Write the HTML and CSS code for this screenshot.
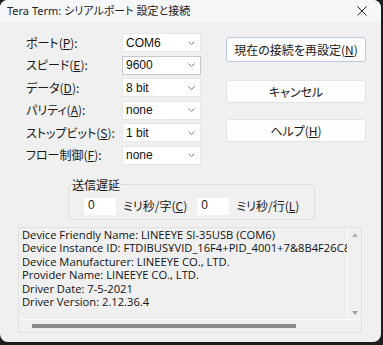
FILE: index.html
```html
<!DOCTYPE html>
<html lang="ja">
<head>
<meta charset="utf-8">
<link rel="stylesheet" href="styles.css">
</head>
<body>
<div class="window">
  <div class="titlebar">
    <span class="title">Tera Term: シリアルポート 設定と接続</span>
    <svg class="close" width="10" height="10" viewBox="0 0 10 10"><path d="M0.5 0.5 L9.5 9.5 M9.5 0.5 L0.5 9.5" stroke="#222" stroke-width="1" fill="none"/></svg>
  </div>
  <div class="content">
    <div class="top">
      <div class="form">
        <div class="row"><span class="label">ポート(<u>P</u>):</span><div class="combo"><span>COM6</span><svg class="chev" width="7" height="4" viewBox="0 0 7 4"><path d="M0.5 0.5 L3.5 3.5 L6.5 0.5" stroke="#888" fill="none"/></svg></div></div>
        <div class="row"><span class="label">スピード(<u>E</u>):</span><div class="combo focus"><span>9600</span><svg class="chev" width="7" height="4" viewBox="0 0 7 4"><path d="M0.5 0.5 L3.5 3.5 L6.5 0.5" stroke="#888" fill="none"/></svg></div></div>
        <div class="row"><span class="label">データ(<u>D</u>):</span><div class="combo"><span>8 bit</span><svg class="chev" width="7" height="4" viewBox="0 0 7 4"><path d="M0.5 0.5 L3.5 3.5 L6.5 0.5" stroke="#888" fill="none"/></svg></div></div>
        <div class="row"><span class="label">パリティ(<u>A</u>):</span><div class="combo"><span>none</span><svg class="chev" width="7" height="4" viewBox="0 0 7 4"><path d="M0.5 0.5 L3.5 3.5 L6.5 0.5" stroke="#888" fill="none"/></svg></div></div>
        <div class="row"><span class="label">ストップビット(<u>S</u>):</span><div class="combo"><span>1 bit</span><svg class="chev" width="7" height="4" viewBox="0 0 7 4"><path d="M0.5 0.5 L3.5 3.5 L6.5 0.5" stroke="#888" fill="none"/></svg></div></div>
        <div class="row"><span class="label">フロー制御(<u>F</u>):</span><div class="combo"><span>none</span><svg class="chev" width="7" height="4" viewBox="0 0 7 4"><path d="M0.5 0.5 L3.5 3.5 L6.5 0.5" stroke="#888" fill="none"/></svg></div></div>
      </div>
      <div class="buttons">
        <div class="btn default">現在の接続を再設定(<u>N</u>)</div>
        <div class="btn cancel">キャンセル</div>
        <div class="btn help">ヘルプ(<u>H</u>)</div>
      </div>
    </div>
    <fieldset class="group">
      <legend>送信遅延</legend>
      <div class="group-body">
        <div class="edit">0</div><span class="unit">ミリ秒/字(<u>C</u>)</span>
        <div class="edit">0</div><span class="unit">ミリ秒/行(<u>L</u>)</span>
      </div>
    </fieldset>
    <div class="info">
      <div class="info-main">
        <div class="info-text">Device Friendly Name: LINEEYE SI-35USB (COM6)<br>Device Instance ID: FTDIBUS¥VID_16F4+PID_4001+7&amp;8B4F26C&amp;0&amp;2<br>Device Manufacturer: LINEEYE CO., LTD.<br>Provider Name: LINEEYE CO., LTD.<br>Driver Date: 7-5-2021<br>Driver Version: 2.12.36.4</div>
        <div class="vscroll"><span class="arrow up"></span><span class="arrow down"></span></div>
      </div>
      <div class="hscroll"><div class="thumb"></div></div>
    </div>
  </div>
</div>
</body>
</html>
```
FILE: styles.css
```css
html, body {
  margin: 0;
  padding: 0;
  background: #1e1e1e;
  width: 383px;
  height: 345px;
  overflow: hidden;
}
body {
  font-family: "Noto Sans CJK JP", sans-serif;
  font-size: 12px;
  font-feature-settings: "palt";
  color: #1a1a1a;
}
u { text-underline-offset: 1px; }
.window {
  width: 381px;
  height: 342px;
  background: #f0f0f0;
  border-radius: 8px;
  overflow: hidden;
  display: flex;
  flex-direction: column;
}
.titlebar {
  height: 22px;
  flex: none;
  background: #f6f7f9;
  display: flex;
  align-items: center;
  justify-content: space-between;
  padding: 0 14px 0 7px;
}
.title {
  font-family: "Noto Sans", "Noto Sans CJK JP", sans-serif;
  font-size: 11px;
  color: #222;
  line-height: 14px;
}
.close { display: block; }
.content {
  padding: 11px 0 0 0;
  display: flex;
  flex-direction: column;
}
.top {
  display: flex;
  padding-left: 26px;
}
.form {
  display: flex;
  flex-direction: column;
  gap: 3.5px;
  width: 176px;
}
.row {
  display: flex;
  align-items: center;
  height: 19px;
}
.label {
  width: 96px;
  line-height: 14px;
}
.combo {
  width: 79px;
  height: 19px;
  box-sizing: border-box;
  background: #fff;
  border: 1px solid #e6e6e6;
  display: flex;
  align-items: center;
  justify-content: space-between;
  padding: 0 5px 0 3px;
  font-family: "Liberation Sans", sans-serif;
  font-size: 12px;
  color: #111;
}
.combo.focus { border-color: #c8c8c8; }
.chev { display: block; }
.buttons {
  margin-left: 24px;
  padding-top: 4px;
  display: flex;
  flex-direction: column;
  width: 140px;
}
.btn {
  height: 23px;
  box-sizing: border-box;
  background: #fdfdfd;
  border: 1px solid #e3e3e3;
  border-radius: 3px;
  display: flex;
  align-items: center;
  justify-content: center;
  line-height: 14px;
  color: #1a1a1a;
}
.btn.default { height: 25px; border-color: #b8c7e3; }
.btn.cancel { margin-top: 18px; }
.btn.help { margin-top: 16px; }
.group {
  margin: 13px 0 0 68px;
  width: 247px;
  height: 42px;
  box-sizing: border-box;
  border: 1px solid #dedede;
  border-radius: 3px;
  padding: 0;
}
.group legend {
  padding: 0;
  margin-left: 3px;
  line-height: 14px;
}
.group-body {
  display: flex;
  align-items: center;
  padding: 6px 0 0 15px;
}
.edit {
  width: 32px;
  height: 17px;
  box-sizing: border-box;
  background: #fff;
  padding-left: 4px;
  font-family: "Liberation Sans", sans-serif;
  line-height: 15px;
}
.unit {
  margin-left: 7px;
  margin-right: 10px;
  line-height: 14px;
}
.info {
  margin: 7px 0 0 18px;
  width: 344px;
  height: 106px;
  box-sizing: border-box;
  border: 1px solid #e2e2e2;
  display: flex;
  flex-direction: column;
}
.info-main {
  display: flex;
  height: 91px;
  border-bottom: 1px solid #fbfbfb;
}
.info-text {
  width: 329px;
  overflow: hidden;
  white-space: nowrap;
  border-right: 1px solid #fbfbfb;
  padding: 0 0 0 3px;
  box-sizing: border-box;
  font-family: "Open Sans", sans-serif;
  font-size: 11.2px;
  line-height: 13.5px;
  color: #111;
}
.vscroll {
  flex: 1;
  display: flex;
  flex-direction: column;
  justify-content: space-between;
  align-items: center;
  padding: 5px 0 4px;
}
.arrow {
  width: 0;
  height: 0;
  border-left: 3.5px solid transparent;
  border-right: 3.5px solid transparent;
}
.arrow.up { border-bottom: 4px solid #b0b0b0; }
.arrow.down { border-top: 4px solid #a0a0a0; }
.hscroll {
  flex: 1;
  display: flex;
  align-items: center;
  padding-left: 13px;
}
.thumb {
  width: 264px;
  height: 4px;
  background: #8a8a8a;
}
```
